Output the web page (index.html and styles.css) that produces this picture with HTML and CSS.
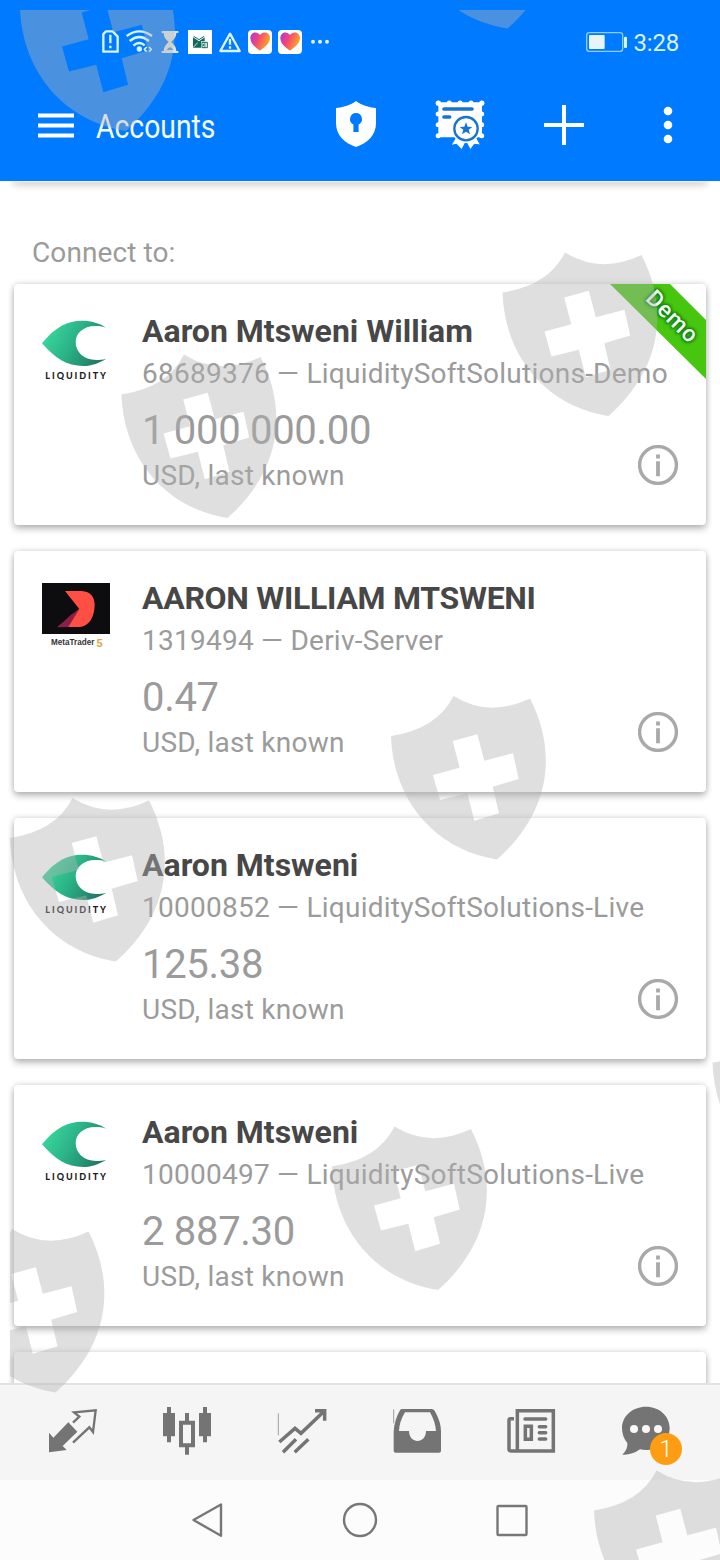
FILE: index.html
```html
<!DOCTYPE html>
<html lang="en">
<head>
<meta charset="utf-8">
<title>Accounts</title>
<link rel="stylesheet" href="styles.css">
</head>
<body>
<svg class="defs" width="0" height="0">
  <defs>
    <linearGradient id="wave" x1="0" y1="0.2" x2="1" y2="0.6">
      <stop offset="0" stop-color="#3cdca0"/><stop offset="0.5" stop-color="#2bb387"/><stop offset="1" stop-color="#1f7a66"/>
    </linearGradient>
    <linearGradient id="heart" x1="0" y1="0" x2="1" y2="0.4">
      <stop offset="0" stop-color="#a43be0"/><stop offset="0.45" stop-color="#f2447c"/><stop offset="1" stop-color="#ffa51e"/>
    </linearGradient>
    <symbol id="liquidity" viewBox="126 258 204 204">
      <path fill="url(#wave)" d="M126 340C165 290 205 272 245 272C275 272 300 280 319 293C260 277 227 305 227 337C227 370 260 402 319 386C300 398 275 408 250 408C200 408 165 385 126 340Z"/>
      <text class="logo-word" x="136" y="446" textLength="182">LIQUIDITY</text>
    </symbol>
    <symbol id="metatrader" viewBox="126 129 204 204">
      <path fill="#0d0d0f" d="M126 129H330V282H126Z"/>
      <path fill="#ff4f45" d="M195 153H245C272 155 284 170 284 196C283 232 268 258 240 261H173L238 207Z"/>
      <path fill="#8c1f45" d="M173 262L213 224L238 207L205 261Z"/>
      <text class="logo-small" x="153" y="314" textLength="130" lengthAdjust="spacingAndGlyphs">MetaTrader</text>
      <text class="logo-five" x="289" y="321">5</text>
    </symbol>
    <symbol id="info" viewBox="0 0 40 40">
      <circle cx="20" cy="20" r="18.400" fill="none" stroke="#a9a9a9" stroke-width="3.400"/>
      <path fill="#a9a9a9" d="M18.100 9.500h3.800v4h-3.800zM18.100 16.300h3.800v15h-3.800z"/>
    </symbol>
    <symbol id="like" viewBox="744 90 72 72">
      <rect x="744" y="90" width="72" height="72" rx="12" fill="#fff"/>
      <path fill="url(#heart)" d="M780 152C762 139 751 128 751 114C751 96 772 92 780 105C788 92 810 96 810 114C810 128 798 139 780 152Z"/>
    </symbol>
    <path id="guard" fill-rule="evenodd" d="M0 40Q46 33 62.500 0Q98 22 139 2.500C167 57 159 117 106 163.500C45 154 2 105 0 40ZM61.700 45L86.300 38.300L93.300 64.700L122 57.300L127.700 83L101.700 90.700L108 117.300L83.300 124.700L76.300 97.300L49 104L42 79L68.700 71.700Z"/>
    <clipPath id="area"><rect x="10" y="10" width="710" height="1550"/></clipPath>
  </defs>
</svg>

<div class="screen">
  <header class="header">
    <div class="status">
      <div class="status-icons">
        <svg viewBox="294 90 72 72" class="line"><path d="M318 94H338L353 110V155H310V102Z"/><path d="M331 104V130M331 137V145"/></svg>
        <svg viewBox="384 90 72 72" class="line"><path d="M380 108Q418 80 456 108M389 123Q418 99 447 123M400 137Q418 121 434 136"/><circle class="solid" cx="418" cy="147" r="8"/><path class="thin" d="M440 141L433 148L440 155M447 141L454 148L447 155"/></svg>
        <svg viewBox="474 90 72 72"><path fill="#dfe6ea" d="M485 93H535V99H529C528 114 519 120 514 126C520 132 528 138 529 153H535V159H485V153H491C492 138 500 132 506 126C500 120 492 114 491 99H485Z"/><path fill="#4a90da" d="M500 150Q510 134 520 150Z"/></svg>
        <svg viewBox="564 90 72 72"><path fill="#fff" d="M564 90H636V162H564Z"/><path fill="#12695f" d="M579 112L597 124L614 112V124H603V143H579Z"/><path fill="none" stroke="#12695f" stroke-width="3" d="M581 109L597 119L612 109M606 127H622V143H606ZM617 132H611V138H617"/><path stroke="#fff" stroke-width="2.500" d="M580 142L593 128"/></svg>
        <svg viewBox="654 90 72 72" class="line"><path d="M690 101L719 153H661Z"/><path d="M690 117V134M690 139V146"/></svg>
        <svg><use href="#like"/></svg>
        <svg><use href="#like"/></svg>
        <svg viewBox="924 90 72 72" fill="#d8f4ff"><circle cx="939" cy="125" r="6"/><circle cx="960" cy="125" r="6"/><circle cx="981" cy="125" r="6"/></svg>
      </div>
      <div class="status-right">
        <svg class="battery" viewBox="678 96 126 60"><rect x="680" y="98" width="108" height="56" rx="8" fill="none" stroke="#8fccff" stroke-width="4"/><rect x="687" y="105" width="47" height="42" rx="3" fill="#e8f4f8"/><rect x="792" y="110" width="9" height="34" rx="3" fill="#d8f4ff"/></svg>
        <span class="clock">3:28</span>
      </div>
    </div>
    <div class="toolbar">
      <svg class="menu" viewBox="0 0 36 25" fill="#fff"><path d="M0 0.500h36v4H0zM0 10.500h36v4H0zM0 20.500h36v4H0z"/></svg>
      <h1 class="title">Accounts</h1>
      <div class="actions">
        <svg class="act-shield" viewBox="0 1 40 46"><path fill="#fff" d="M20 0C25 4 33 6.500 40 7V22C40 34 32 42 20 46C8 42 0 34 0 22V7C7 6.500 15 4 20 0Z"/><path fill="#007aff" d="M20 12a6 6 0 0 1 2.600 11.400V31h-5.200V23.400A6 6 0 0 1 20 12Z"/></svg>
        <svg class="act-cert" viewBox="225 300 150 150">
          <path fill="#fff" d="M235 307H366V412H235Z"/>
          <path fill="none" stroke="#fff" stroke-width="15" stroke-linecap="round" stroke-dasharray="0 32.700" d="M235 309H366.500"/>
          <path fill="none" stroke="#fff" stroke-width="15" stroke-linecap="round" stroke-dasharray="0 32.300" d="M234.500 310V408M365 310V408"/>
          <path stroke="#1774cf" stroke-width="11" stroke-linecap="round" d="M252 327H336M252 351H269"/>
          <path fill="#fff" stroke="#007aff" stroke-width="3" d="M290 408L273 436L290 433L305 449L318 425L331 449L343 433L362 435L346 408Z"/>
          <circle cx="318" cy="386" r="43" fill="#fff"/>
          <circle cx="318" cy="386" r="35" fill="#fff" stroke="#1774cf" stroke-width="7"/>
          <path fill="#1774cf" d="M318 367L323 380L337 381L326 389L330 403L318 395L306 403L310 389L299 381L313 380Z"/>
        </svg>
        <svg class="act-add" viewBox="0 0 40 40"><path stroke="#fff" stroke-width="4" d="M0 20H40M20 0V40"/></svg>
        <svg class="act-more" viewBox="0 0 10 40" fill="#fff"><circle cx="5" cy="6" r="4.300"/><circle cx="5" cy="20" r="4.300"/><circle cx="5" cy="34" r="4.300"/></svg>
      </div>
    </div>
  </header>

  <main class="content">
    <div class="card card-above"></div>
    <h2 class="section">Connect to:</h2>
    <div class="list">
      <article class="card">
        <svg class="logo"><use href="#liquidity"/></svg>
        <div class="details">
          <h3 class="name">Aaron Mtsweni William</h3>
          <p class="server">68689376 — LiquiditySoftSolutions-Demo</p>
          <p class="balance">1 000 000.00</p>
          <p class="currency">USD, last known</p>
        </div>
        <svg class="info"><use href="#info"/></svg>
        <div class="ribbon"><span class="ribbon-text">Demo</span></div>
      </article>
      <article class="card">
        <svg class="logo"><use href="#metatrader"/></svg>
        <div class="details">
          <h3 class="name name-caps">AARON WILLIAM MTSWENI</h3>
          <p class="server">1319494 — Deriv-Server</p>
          <p class="balance">0.47</p>
          <p class="currency">USD, last known</p>
        </div>
        <svg class="info"><use href="#info"/></svg>
      </article>
      <article class="card">
        <svg class="logo"><use href="#liquidity"/></svg>
        <div class="details">
          <h3 class="name">Aaron Mtsweni</h3>
          <p class="server">10000852 — LiquiditySoftSolutions-Live</p>
          <p class="balance">125.38</p>
          <p class="currency">USD, last known</p>
        </div>
        <svg class="info"><use href="#info"/></svg>
      </article>
      <article class="card">
        <svg class="logo"><use href="#liquidity"/></svg>
        <div class="details">
          <h3 class="name">Aaron Mtsweni</h3>
          <p class="server">10000497 — LiquiditySoftSolutions-Live</p>
          <p class="balance">2 887.30</p>
          <p class="currency">USD, last known</p>
        </div>
        <svg class="info"><use href="#info"/></svg>
      </article>
      <article class="card"></article>
    </div>
  </main>

  <nav class="tabs">
    <svg viewBox="147 105 147 150"><path class="fill" d="M147 188L160 203L205 157L232 185L188 228L200 240L147 247Z"/><path class="stroke s7" d="M219 158L238 140L222 127L287 121L279 186L268 172L219 218"/></svg>
    <svg viewBox="489 105 147 150"><path class="fill" d="M489 129h36v70h-36zM597 129h36v70h-36z"/><path class="stroke s12" d="M507 111V217M615 111V217M561 129V153M561 231V254"/><path class="stroke s12" d="M543 158h36v68h-36z"/></svg>
    <svg viewBox="831 105 147 150"><path class="stroke s2" d="M832 130V196"/><path class="stroke s10" d="M835 216L882 175L900 190L970 123M942 122H971V152M846 247L885 208M881 247L922 208"/></svg>
    <svg viewBox="96 105 147 150"><path class="stroke s2" d="M98 118V160"/><path class="fill" fill-rule="evenodd" d="M123 117H212Q218 117 221 122Q240 155 240 185V242Q240 248 234 248H104Q98 248 98 242V185Q100 150 117 121Q119 117 123 117ZM132 127Q115 155 114 183H144C144 223 195 223 195 183H225Q223 155 207 127Z"/></svg>
    <svg viewBox="441 105 147 150"><path class="stroke s10" d="M472 122H580V243H472ZM462 146H451Q447 146 447 151V237Q447 243 453 243H475"/><path class="stroke s10 round" d="M495 147H557M538 170H557M538 188H557M538 207H557"/><path class="stroke s10" d="M496 169H514V208H496Z"/></svg>
    <div class="chat">
      <svg viewBox="786 105 147 150"><path class="fill" d="M858 110C898 110 929 138 929 174C929 211 898 240 858 240Q848 240 840 238Q815 256 787 254Q804 238 802 219Q786 200 786 174C786 138 818 110 858 110Z"/><g fill="#f8f8f8"><circle cx="822" cy="177" r="12"/><circle cx="858" cy="177" r="12"/><circle cx="894" cy="177" r="12"/></g></svg>
      <span class="badge">1</span>
    </div>
  </nav>

  <footer class="system">
    <svg viewBox="0 0 40 40"><path d="M5.500 20L33 4.500V35.800Z"/></svg>
    <svg viewBox="0 0 40 40"><circle cx="20" cy="20" r="16"/></svg>
    <svg viewBox="0 0 40 40"><rect x="5.500" y="6" width="29" height="29" rx="1"/></svg>
  </footer>

  <svg class="guards" viewBox="0 0 720 1560">
    <g clip-path="url(#area)">
      <use href="#guard" x="20" y="-32.500"/>
      <use href="#guard" x="401.500" y="-135"/>
      <use href="#guard" x="502.500" y="252.500"/>
      <use href="#guard" x="121.500" y="354.500"/>
      <use href="#guard" x="391" y="696"/>
      <use href="#guard" x="10" y="798"/>
      <use href="#guard" x="332" y="1126.500"/>
      <use href="#guard" x="712.500" y="1022.500"/>
      <use href="#guard" x="-50.500" y="1229"/>
      <use href="#guard" x="594" y="1470.500"/>
    </g>
  </svg>
</div>
</body>
</html>
```

FILE: styles.css
```css
* { box-sizing: border-box; margin: 0; padding: 0; }

body {
  background: #fff;
  font-family: Roboto, "Noto Sans", sans-serif;
}

svg { display: block; flex: none; overflow: visible; }
.defs { position: absolute; }

.screen {
  position: relative;
  display: flex;
  flex-direction: column;
  width: 720px;
  height: 1560px;
  overflow: hidden;
}

/* Header */
.header {
  flex: none;
  height: 181px;
  background: #007aff;
}

.status {
  display: flex;
  justify-content: space-between;
  align-items: center;
  height: 84px;
  padding: 0 41px 0 98px;
}

.status-icons { display: flex; gap: 6px; }
.status-icons svg { width: 24px; height: 24px; }

.line { fill: none; stroke: #d8f4ff; stroke-width: 7; stroke-linejoin: round; }
.line .solid { fill: #d8f4ff; stroke: none; }
.line .thin { stroke-width: 5; }

.status-right { display: flex; align-items: center; gap: 6px; }
.battery { width: 42px; height: 20px; }

.clock { padding-top: 1px; color: #d8f4ff; font-size: 24px; line-height: 30px; letter-spacing: -0.2px; }

.toolbar {
  display: flex;
  align-items: center;
  height: 82px;
  padding: 0 47px 0 38px;
}

.menu { width: 36px; height: 25px; }

.title {
  width: 200px;
  margin-left: 22px;
  padding-top: 2px;
  color: #f5fbff;
  font-size: 34px;
  font-weight: 400;
  line-height: 44px;
  transform: scaleX(0.833);
  transform-origin: 0 50%;
}

.actions { display: flex; align-items: center; margin-left: 40px; }
.act-shield { width: 40px; height: 46px; }
.act-cert { width: 50px; height: 50px; margin-left: 59px; }
.act-add { width: 40px; height: 40px; margin-left: 59px; }
.act-more { width: 10px; height: 40px; margin-left: 79px; }

/* Account list */
.content { flex: 1; min-height: 0; overflow: hidden; }

.card {
  position: relative;
  display: flex;
  height: 241px;
  padding: 26px 28px;
  border-radius: 4px;
  background: #fff;
  box-shadow: 0 4px 7px rgba(0, 0, 0, 0.24), 0 0 6px rgba(0, 0, 0, 0.16);
}

/* Lower edge of the card that has scrolled under the header */
.card-above {
  height: 1px;
  margin: 0 14px;
  padding: 0;
  background: #eee;
  box-shadow: 0 1px 7px 1px rgba(60, 20, 20, 0.42);
}

.section {
  margin: 50px 0 0 32px;
  color: #9b9b9b;
  font-size: 28px;
  font-weight: 400;
  line-height: 42px;
  letter-spacing: 0.1px;
}

.list {
  display: flex;
  flex-direction: column;
  gap: 26px;
  padding: 10px 14px 0;
}

.list .card { flex: none; }

.logo { width: 68px; height: 68px; margin-top: 6px; }
.logo-word { font: 900 27px Lato, sans-serif; fill: #1c1c1c; }
.logo-small { font: 700 27px "Liberation Sans", sans-serif; fill: #333; }
.logo-five { font: 700 34px Roboto, sans-serif; fill: #dfa63c; }

.details { flex: 1; min-width: 0; margin-left: 32px; color: #9b9b9b; white-space: nowrap; }
.name { color: #474747; font-size: 32px; font-weight: 700; line-height: 42px; letter-spacing: 0; }
.name-caps { letter-spacing: -0.3px; }
.server { padding-top: 1px; font-size: 28px; line-height: 42px; letter-spacing: 0.25px; }
.balance { margin-top: 8px; font-size: 40px; line-height: 56px; letter-spacing: -0.3px; }
.currency { margin-top: -1px; font-size: 28px; line-height: 35px; letter-spacing: 0.25px; }

.info { align-self: flex-end; width: 40px; height: 40px; margin-bottom: 14px; }

.ribbon {
  position: absolute;
  top: 0;
  right: 0;
  width: 96px;
  height: 95px;
  background: #46c60e;
  clip-path: polygon(0 0, 60px 0, 96px 36px, 96px 95px);
}

.ribbon-text {
  position: absolute;
  top: 18px;
  left: 22px;
  width: 80px;
  color: #f2fff0;
  font-size: 23px;
  font-weight: 500;
  line-height: 30px;
  letter-spacing: 0.8px;
  text-align: center;
  text-shadow: 0 0 2px #0b7b14, 0 0 3px #0b7b14, 0 0 4px #0b7b14, 0 0 4px #0b7b14;
  transform: rotate(45deg);
}

/* Bottom tabs */
.tabs {
  flex: none;
  display: flex;
  justify-content: space-between;
  height: 97px;
  padding: 20px 49px 0 48.5px;
  border-top: 2px solid #e2e2e2;
  background: #f5f5f5;
}

.tabs svg { width: 49px; height: 50px; }
.fill { fill: #747474; }
.stroke { fill: none; stroke: #747474; }
.round { stroke-linecap: round; }
.s2 { stroke-width: 2; }
.s7 { stroke-width: 7; }
.s10 { stroke-width: 10.5; }
.s12 { stroke-width: 12; }

.chat { position: relative; height: 50px; }

.badge {
  position: absolute;
  left: 28px;
  top: 28px;
  width: 32px;
  height: 32px;
  border-radius: 50%;
  background: #ff9d12;
  color: #fff;
  font-size: 24px;
  font-weight: 300;
  line-height: 32px;
  text-align: center;
}

/* System navigation */
.system {
  flex: none;
  display: flex;
  justify-content: center;
  align-items: center;
  gap: 112px;
  height: 80px;
  background: #fcfcfc;
}

.system svg {
  width: 40px;
  height: 40px;
  fill: none;
  stroke: #777;
  stroke-width: 2.4;
  stroke-linejoin: round;
}

/* Translucent shields floating over the whole screen */
.guards {
  position: absolute;
  inset: 0;
  z-index: 2;
  width: 720px;
  height: 1560px;
  fill: rgba(178, 178, 178, 0.416);
  pointer-events: none;
}
```
